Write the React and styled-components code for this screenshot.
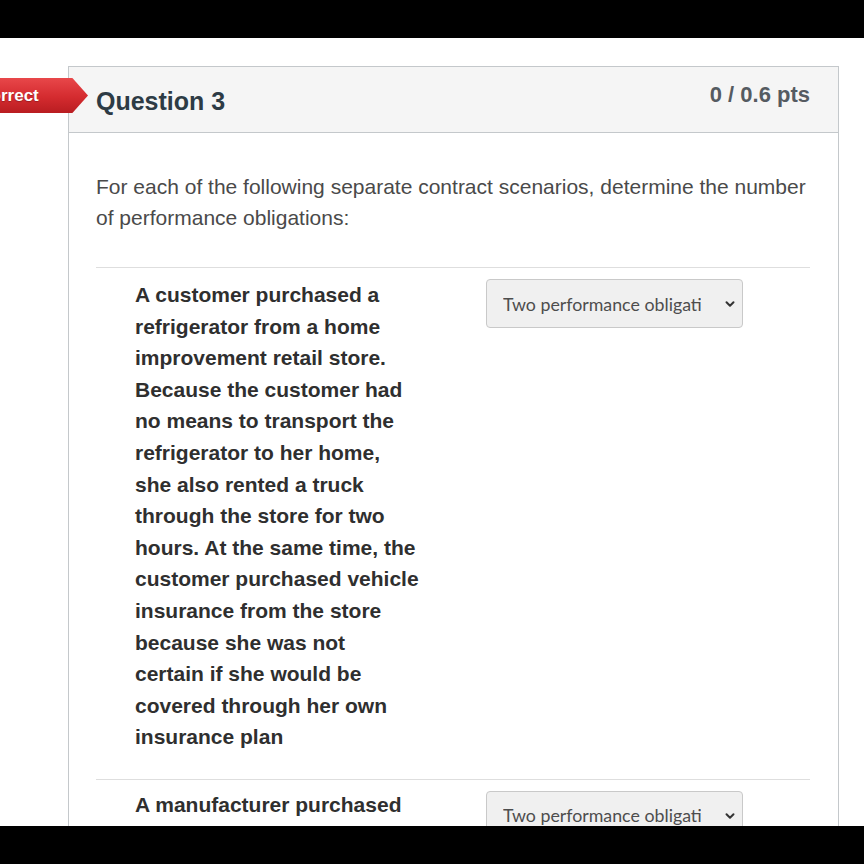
import styled, { createGlobalStyle } from "styled-components";
import { ChevronDown } from "lucide-react";

const GlobalStyle = createGlobalStyle`
  html, body {
    margin: 0;
    padding: 0;
    background: #000;
  }
  * {
    box-sizing: border-box;
  }
`;

const Screen = styled.div`
  display: flex;
  flex-direction: column;
  height: 864px;
  background: #000;
`;

const Letterbox = styled.div`
  height: 38px;
  flex: none;
  background: #000;
`;

const Viewport = styled.div`
  flex: 1;
  overflow: hidden;
  background: #fff;
  padding: 28px 25px 0 68px;
`;

const Card = styled.div`
  position: relative;
  width: 771px;
  border: 1px solid #c4c8cb;
  border-bottom: none;
  font-family: "Liberation Sans", Arial, sans-serif;
`;

const Header = styled.div`
  display: flex;
  justify-content: space-between;
  height: 66px;
  padding: 0 28px 0 27px;
  background: #f5f5f5;
  border-bottom: 1px solid #c4c8cb;
`;

// the "Incorrect" flag hangs off the card's left edge and is cut by the window
const Ribbon = styled.div`
  position: absolute;
  left: -111px;
  top: 11px;
  height: 35px;
  width: 130px;
  padding-left: 8px;
  display: flex;
  align-items: center;
  background: linear-gradient(180deg, #e8474a 0%, #d42b2f 55%, #b91d21 100%);
  clip-path: polygon(0 0, 88% 0, 100% 50%, 88% 100%, 0 100%);
  color: #fff;
  font-weight: bold;
  font-size: 17px;
  text-shadow: 0 1px 1px rgba(0, 0, 0, 0.25);
`;

const Title = styled.h2`
  margin: 0;
  align-self: center;
  padding-top: 4px;
  font-size: 25px;
  font-weight: bold;
  color: #2d3b45;
`;

const Points = styled.div`
  padding-top: 15px;
  font-size: 22px;
  line-height: 1.2;
  font-weight: bold;
  color: #555b61;
`;

const Body = styled.div`
  padding: 38px 28px 0 27px;
`;

const Prompt = styled.p`
  margin: 0 0 34px;
  font-size: 21px;
  line-height: 31px;
  color: #4a4a4a;
`;

const AnswerRow = styled.div`
  display: grid;
  grid-template-columns: 284px 257px;
  column-gap: 67px;
  align-items: start;
  padding: 11px 0 26px 39px;
  border-top: 1px solid #dedede;
`;

const AnswerText = styled.div`
  font-size: 21px;
  line-height: 31.6px;
  font-weight: bold;
  color: #2f2f2f;
  margin-top: ${(p) => p.$offset || 0}px;
`;

const SelectWrap = styled.div`
  position: relative;
  width: 257px;
  height: 49px;
`;

const Select = styled.select`
  appearance: none;
  width: 100%;
  height: 100%;
  padding: 0 41px 0 16px;
  border: 1px solid #c9c9c9;
  border-radius: 4px;
  background: #f0f0f0;
  font-family: Lato, "Open Sans", sans-serif;
  font-size: 17.8px;
  color: #4d4d4d;
  overflow: hidden;
`;

const Chevron = styled(ChevronDown)`
  position: absolute;
  right: 6px;
  top: 18px;
  pointer-events: none;
  color: #333;
`;

const answers = [
  {
    id: 1,
    text: "A customer purchased a refrigerator from a home improvement retail store. Because the customer had no means to transport the refrigerator to her home, she also rented a truck through the store for two hours. At the same time, the customer purchased vehicle insurance from the store because she was not certain if she would be covered through her own insurance plan",
  },
  {
    id: 2,
    text: "A manufacturer purchased customized machinery from a supplier.",
    textOffset: -2,
  },
];

function AnswerSelect() {
  return (
    <SelectWrap>
      <Select defaultValue="two">
        <option value="one">One performance obligation</option>
        <option value="two">Two performance obligations</option>
        <option value="three">Three performance obligations</option>
      </Select>
      <Chevron size={14} strokeWidth={3.4} />
    </SelectWrap>
  );
}

export default function App() {
  return (
    <Screen>
      <GlobalStyle />
      <Letterbox />
      <Viewport>
        <Card>
          <Header>
            <Ribbon>Incorrect</Ribbon>
            <Title>Question 3</Title>
            <Points>0 / 0.6 pts</Points>
          </Header>
          <Body>
            <Prompt>
              For each of the following separate contract scenarios, determine
              the number of performance obligations:
            </Prompt>
            {answers.map((a) => (
              <AnswerRow key={a.id}>
                <AnswerText $offset={a.textOffset}>{a.text}</AnswerText>
                <AnswerSelect />
              </AnswerRow>
            ))}
          </Body>
        </Card>
      </Viewport>
      <Letterbox />
    </Screen>
  );
}
